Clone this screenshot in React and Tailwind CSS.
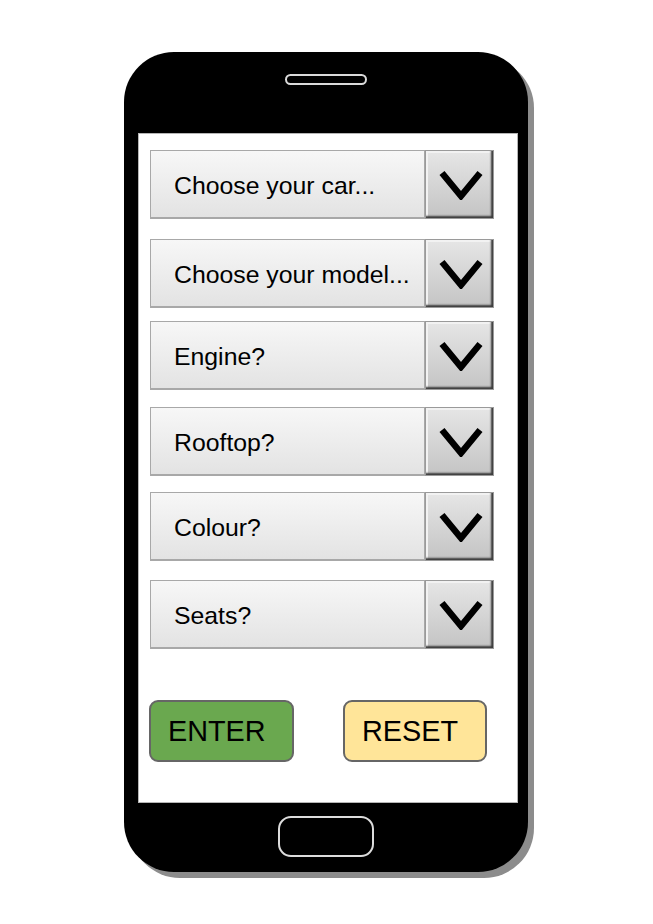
import React from 'react';

const FIELDS = [
  { label: 'Choose your car...', mt: 'mt-[16px]' },
  { label: 'Choose your model...', mt: 'mt-[20px]' },
  { label: 'Engine?', mt: 'mt-[13px]' },
  { label: 'Rooftop?', mt: 'mt-[17px]' },
  { label: 'Colour?', mt: 'mt-[16px]' },
  { label: 'Seats?', mt: 'mt-[19px]' },
];

function Chevron() {
  return (
    <svg width="44" height="30" viewBox="0 0 44 30" fill="none">
      <polyline points="3,3 22,26 41,3" stroke="#000" strokeWidth="6.5" strokeLinejoin="miter" />
    </svg>
  );
}

function Dropdown({ label, mt }) {
  return (
    <div className={`${mt} flex h-[69px] w-[344px]`}>
      <div className="flex flex-1 items-center border border-b-2 border-[#a8a8a8] bg-linear-to-b from-[#f7f7f7] to-[#e3e3e3] pl-[23px] pt-[3px] text-[24.8px] text-black">
        {label}
      </div>
      <div className="flex w-[69px] items-center justify-center border border-[#9a9a9a] bg-linear-to-b from-[#e6e6e6] to-[#c4c4c4] pl-[2px] shadow-[inset_-2px_-2px_2px_#3c3c3c,inset_2px_2px_0_#f2f2f2]">
        <Chevron />
      </div>
    </div>
  );
}

export default function App() {
  return (
    <div className="h-[924px] w-[653px] overflow-hidden bg-white" style={{ fontFamily: '"Liberation Sans", Arial, sans-serif' }}>
      <div className="ml-[124px] mt-[52px] flex h-[820px] w-[404px] flex-col items-start rounded-[50px] bg-black shadow-[6px_6px_0_#8c8c8c]">
        {/* top bezel */}
        <div className="flex h-[81px] w-full justify-center">
          <div className="mt-[22px] h-[11px] w-[82px] rounded-full border-2 border-[#dadada] bg-black" />
        </div>

        {/* screen */}
        <div className="ml-[14px] flex h-[670px] w-[380px] flex-col border border-[#b5b5b5] bg-white pl-[11px]">
          {FIELDS.map(f => (
            <Dropdown key={f.label} label={f.label} mt={f.mt} />
          ))}

          <div className="-ml-px mt-[51px] flex gap-[49px]">
            <button className="flex h-[62px] w-[145px] items-center rounded-[9px] border-2 border-[#666666] bg-[#6aa84f] pl-[17px] pt-[1px] text-[28.8px] text-black">
              ENTER
            </button>
            <button className="flex h-[62px] w-[144px] items-center rounded-[9px] border-2 border-[#666666] bg-[#ffe599] pl-[17px] pt-[1px] text-[28.8px] text-black">
              RESET
            </button>
          </div>
        </div>

        {/* bottom bezel */}
        <div className="flex w-full justify-center">
          <div className="mt-[13px] h-[41px] w-[96px] rounded-[13px] border-2 border-[#dcdcdc] bg-black" />
        </div>
      </div>
    </div>
  );
}
